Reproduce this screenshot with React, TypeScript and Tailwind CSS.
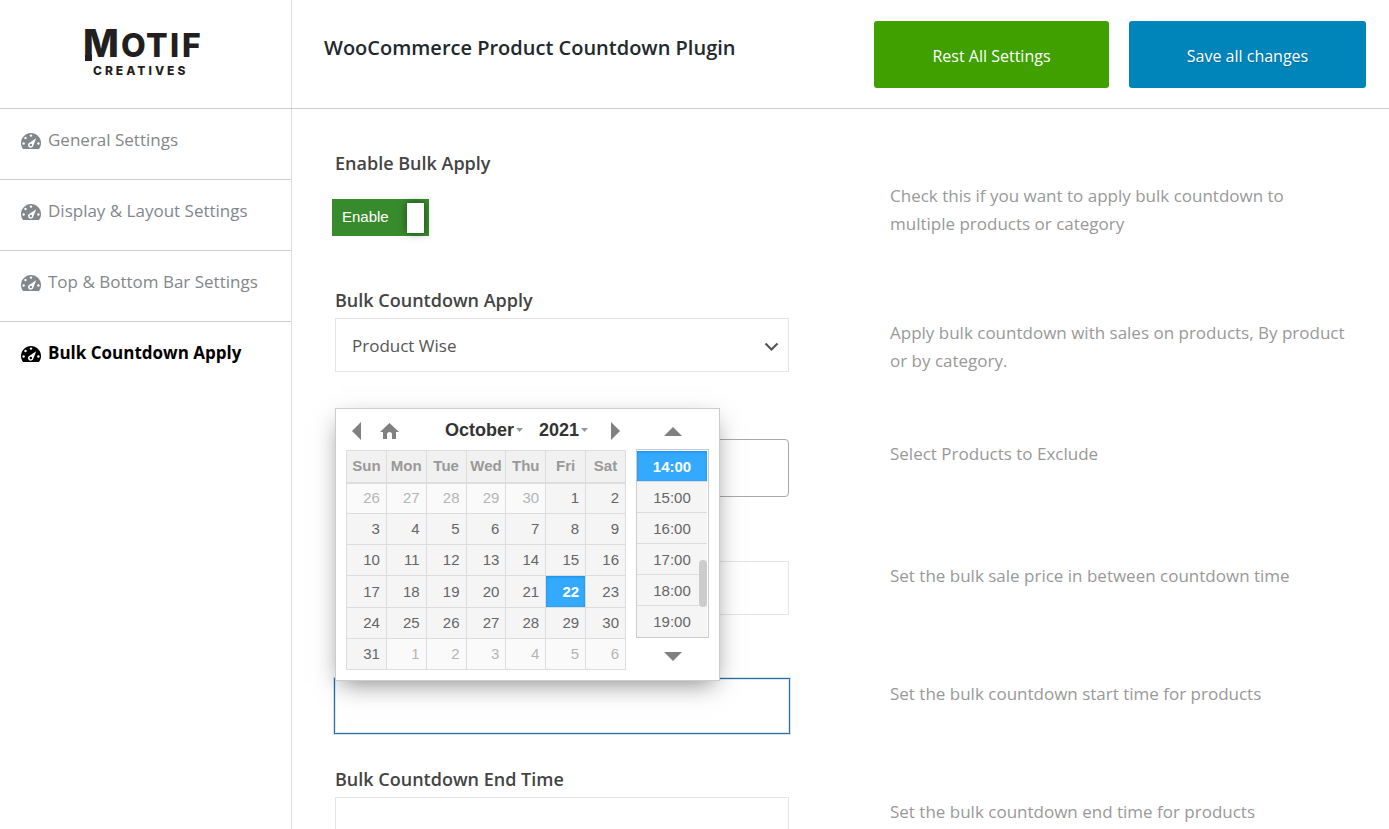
import { useState } from "react";
import type { ReactNode } from "react";

const menu = [
  "General Settings",
  "Display & Layout Settings",
  "Top & Bottom Bar Settings",
  "Bulk Countdown Apply",
];

const weekDays = ["Sun", "Mon", "Tue", "Wed", "Thu", "Fri", "Sat"];

const weeks = [
  [26, 27, 28, 29, 30, 1, 2],
  [3, 4, 5, 6, 7, 8, 9],
  [10, 11, 12, 13, 14, 15, 16],
  [17, 18, 19, 20, 21, 22, 23],
  [24, 25, 26, 27, 28, 29, 30],
  [31, 1, 2, 3, 4, 5, 6],
];

const times = ["14:00", "15:00", "16:00", "17:00", "18:00", "19:00"];

function Logo() {
  return (
    <svg width="124" height="52" viewBox="-2 0 124 52" role="img" aria-label="Motif Creatives">
      <g fill="#231f20" fontFamily="Inter, 'Liberation Sans', sans-serif" fontWeight="800">
        <text x="-1" y="30" fontSize="38">M</text>
        <text x="37" y="30" fontSize="32">O</text>
        <text x="62" y="30" fontSize="32">T</text>
        <text x="86" y="30" fontSize="32">I</text>
        <text x="98" y="30" fontSize="32">F</text>
        <text x="9" y="48" fontSize="12" letterSpacing="3">
          CREATIVES
        </text>
      </g>
      {/* long left leg of the mark */}
      <rect x="1" y="28" width="7" height="6" fill="#231f20" />
    </svg>
  );
}

function DashboardIcon() {
  return (
    <svg className="mt-[2px] shrink-0" width="20" height="16" viewBox="0 0 20 16" fill="currentColor">
      <path d="M2.100 16C.8 14.400 0 12.300 0 10 0 4.500 4.500 0 10 0s10 4.500 10 10c0 2.300-.8 4.400-2.100 6z" />
      <g fill="#fff">
        <circle cx="10" cy="2.600" r="1.200" />
        <circle cx="4.500" cy="5" r="1.200" />
        <circle cx="2.600" cy="10.500" r="1.200" />
        <circle cx="17.400" cy="10.500" r="1.200" />
        <path d="M15.200 5.200l-2.900 7.500a2.700 2.700 0 1 1-3.400-3.300z" />
      </g>
      <circle cx="9.800" cy="12" r="1.200" />
    </svg>
  );
}

function DatePicker() {
  const [day, setDay] = useState(22);
  const [time, setTime] = useState("14:00");

  return (
    <div className="absolute bottom-[52px] left-0 z-10 flex w-[385px] gap-[10px] border border-[#ccc] bg-white pt-2 pr-[10px] pb-[10px] pl-[10px] font-['Liberation_Sans',Arial,sans-serif] text-[15px] text-[#666] shadow-[0_8px_24px_-6px_rgba(0,0,0,0.5)]">
      <div className="w-[280px]">
        <div className="flex h-[33px] items-start text-[#808080]">
          <button type="button" aria-label="Previous month" className="mt-[5px] ml-[6px]">
            <svg width="9" height="18" viewBox="0 0 9 18" fill="currentColor">
              <path d="M9 0v18L0 9z" />
            </svg>
          </button>
          <button type="button" aria-label="Today" className="mt-[6px] ml-[19px]">
            <svg width="19" height="16" viewBox="0 0 19 16" fill="currentColor">
              <path d="M9.500 0 19 9H16V16H12V11.500a2.500 2.500 0 0 0-5 0V16H3V9H0z" />
            </svg>
          </button>
          <button type="button" className="ml-[46px] flex items-center gap-[2px] text-[18px] leading-[26px] font-bold text-[#333]">
            October
            <svg width="7" height="4" viewBox="0 0 7 4" fill="#999">
              <path d="M0 0h7L3.500 4z" />
            </svg>
          </button>
          <button type="button" className="ml-4 flex items-center gap-[2px] text-[18px] leading-[26px] font-bold text-[#333]">
            2021
            <svg width="7" height="4" viewBox="0 0 7 4" fill="#999">
              <path d="M0 0h7L3.500 4z" />
            </svg>
          </button>
          <button type="button" aria-label="Next month" className="mt-[5px] mr-[6px] ml-auto">
            <svg width="9" height="18" viewBox="0 0 9 18" fill="currentColor">
              <path d="M0 0v18l9-9z" />
            </svg>
          </button>
        </div>

        <table className="h-[220px] w-full table-fixed border-collapse">
          <thead>
            <tr>
              {weekDays.map((d) => (
                <th key={d} className="h-8 border border-b-2 border-[#ddd] bg-[#f1f1f1] p-0 text-center leading-[18px] font-bold text-[#999]">
                  {d}
                </th>
              ))}
            </tr>
          </thead>
          <tbody>
            {weeks.map((week, w) => (
              <tr key={w}>
                {week.map((d, i) => {
                  const other = (w === 0 && d > 7) || (w === 5 && d < 7);
                  const current = !other && d === day;
                  return (
                    <td
                      key={i}
                      onClick={() => setDay(d)}
                      className={`h-[31px] cursor-pointer border border-[#ddd] p-0 pr-[6px] text-right leading-[18px] ${
                        current
                          ? "bg-[#33aaff] font-bold text-white shadow-[inset_0_1px_3px_0_#178fe5]"
                          : other
                            ? "bg-[#fafafa] text-[#b5b5b5]"
                            : "bg-[#f5f5f5]"
                      }`}
                    >
                      {d}
                    </td>
                  );
                })}
              </tr>
            ))}
          </tbody>
        </table>
      </div>

      <div className="flex w-[73px] flex-col items-center text-[#808080]">
        <button type="button" aria-label="Earlier" className="flex h-8 items-center pb-1">
          <svg width="18" height="9" viewBox="0 0 18 9" fill="currentColor">
            <path d="M9 0l9 9H0z" />
          </svg>
        </button>
        <div className="relative w-full border border-[#ccc] pt-px pr-px">
          {times.map((t) => (
            <button
              key={t}
              type="button"
              onClick={() => setTime(t)}
              className={`block h-[31px] w-full border-b border-[#ddd] text-center leading-[31px] last-of-type:border-b-0 ${
                t === time
                  ? "bg-[#33aaff] font-bold text-white shadow-[inset_0_1px_3px_0_#178fe5]"
                  : "bg-[#f5f5f5] text-[#666]"
              }`}
            >
              {t}
            </button>
          ))}
          <div className="absolute top-[110px] right-px h-[47px] w-2 rounded bg-[#ccc]" />
        </div>
        <button type="button" aria-label="Later" className="flex flex-1 items-center pt-1">
          <svg width="18" height="9" viewBox="0 0 18 9" fill="currentColor">
            <path d="M0 0h18L9 9z" />
          </svg>
        </button>
      </div>
    </div>
  );
}

function Help({ children }: { children: ReactNode }) {
  return <p className="-mr-1 pt-[33px] text-[17px] leading-7 text-[#999]">{children}</p>;
}

function Row({ id, label, help, children }: { id: string; label?: string; help: string; children: ReactNode }) {
  return (
    <div className="grid grid-cols-2 gap-[101px] pb-8">
      <div>
        <label htmlFor={id} className="block h-8 text-[18px] leading-7 font-semibold text-[#444]">
          {label}
        </label>
        {children}
      </div>
      <Help>{help}</Help>
    </div>
  );
}

export default function App() {
  const [active, setActive] = useState(3);
  const [enabled, setEnabled] = useState(true);

  return (
    <div className="flex h-screen flex-col overflow-hidden bg-white font-['Open_Sans','Noto_Sans',sans-serif]">
      <header className="flex border-b border-[#ccc]">
        <div className="flex h-[108px] w-[292px] shrink-0 justify-center border-r border-[#ddd] pt-[27px] pr-[4px]">
          <Logo />
        </div>
        <div className="flex flex-1 items-start justify-between pt-[21px] pr-[23px] pl-8">
          <h1 className="pt-[13px] text-[20px] leading-7 font-semibold text-[#23282d]">
            WooCommerce Product Countdown Plugin
          </h1>
          <div className="flex gap-5 text-[16px] text-white">
            <button type="button" className="h-[67px] w-[235px] rounded-[3px] bg-[#3fa000] pt-[3px]">
              Rest All Settings
            </button>
            <button type="button" className="h-[67px] w-[237px] rounded-[3px] bg-[#0085ba] pt-[3px] [text-shadow:0_1px_1px_#006799]">
              Save all changes
            </button>
          </div>
        </div>
      </header>

      <div className="flex flex-1">
        <nav className="w-[292px] shrink-0 border-r border-[#ddd]">
          {menu.map((item, i) => (
            <a
              key={item}
              href="#"
              onClick={() => setActive(i)}
              className={`flex items-center gap-[7px] border-b border-[#ccc] pt-[17px] pb-[25px] pl-[21px] text-[17px] leading-7 last:border-b-0 ${
                i === active ? "font-bold text-black" : "text-[#82878c]"
              }`}
            >
              <DashboardIcon />
              {item}
            </a>
          ))}
        </nav>

        <main className="flex-1 pt-10 pr-[45px] pl-[43px]">
          <div className="grid h-[137px] grid-cols-2 gap-[101px]">
            <div>
              <span className="block text-[18px] leading-7 font-semibold text-[#444]">Enable Bulk Apply</span>
              <label className="mt-[22px] -ml-[3px] flex h-[37px] w-[97px] cursor-pointer items-center justify-between bg-[#388b2c] pr-[5px] pl-[10px] font-['Liberation_Sans',Arial,sans-serif] text-[15px] text-white">
                <input
                  type="checkbox"
                  checked={enabled}
                  onChange={(e) => setEnabled(e.target.checked)}
                  className="sr-only"
                />
                Enable
                <span className="h-[30px] w-[17px] bg-white shadow-[0_0_8px_rgba(0,0,0,0.5)]" />
              </label>
            </div>
            <Help>Check this if you want to apply bulk countdown to multiple products or category</Help>
          </div>

          <Row id="apply" label="Bulk Countdown Apply" help="Apply bulk countdown with sales on products, By product or by category.">
            <div className="relative mb-[3px]">
              <select id="apply" className="h-[54px] w-full appearance-none border border-[#e5e5e5] bg-white px-4 pt-[2px] text-[17px] text-[#555]">
                <option>Product Wise</option>
                <option>Category Wise</option>
              </select>
              <svg className="pointer-events-none absolute top-[24px] right-[10px]" width="15" height="10" viewBox="0 0 15 10" fill="none" stroke="#555" strokeWidth="2.200">
                <path d="M1.500 1.500l6 6 6-6" />
              </svg>
            </div>
          </Row>

          <Row id="exclude" help="Select Products to Exclude">
            <input id="exclude" type="text" aria-label="Exclude products" className="h-[58px] w-full rounded-[4px] border border-[#aaa] px-4" />
          </Row>

          <Row id="price" help="Set the bulk sale price in between countdown time">
            <input id="price" type="text" aria-label="Bulk sale price" className="h-[54px] w-full border border-[#e5e5e5] px-4" />
          </Row>

          <Row id="start" help="Set the bulk countdown start time for products">
            <div className="relative">
              <input
                id="start"
                type="text"
                aria-label="Bulk countdown start time"
                className="h-[54px] w-full border border-[#e5e5e5] px-4 shadow-[0_0_0_1px_#2271b1,0_0_0_2px_#d3e3ef] outline-none"
              />
              <DatePicker />
            </div>
          </Row>

          <Row id="end" label="Bulk Countdown End Time" help="Set the bulk countdown end time for products">
            <input id="end" type="text" className="h-[54px] w-full border border-[#e5e5e5] px-4" />
          </Row>
        </main>
      </div>
    </div>
  );
}
